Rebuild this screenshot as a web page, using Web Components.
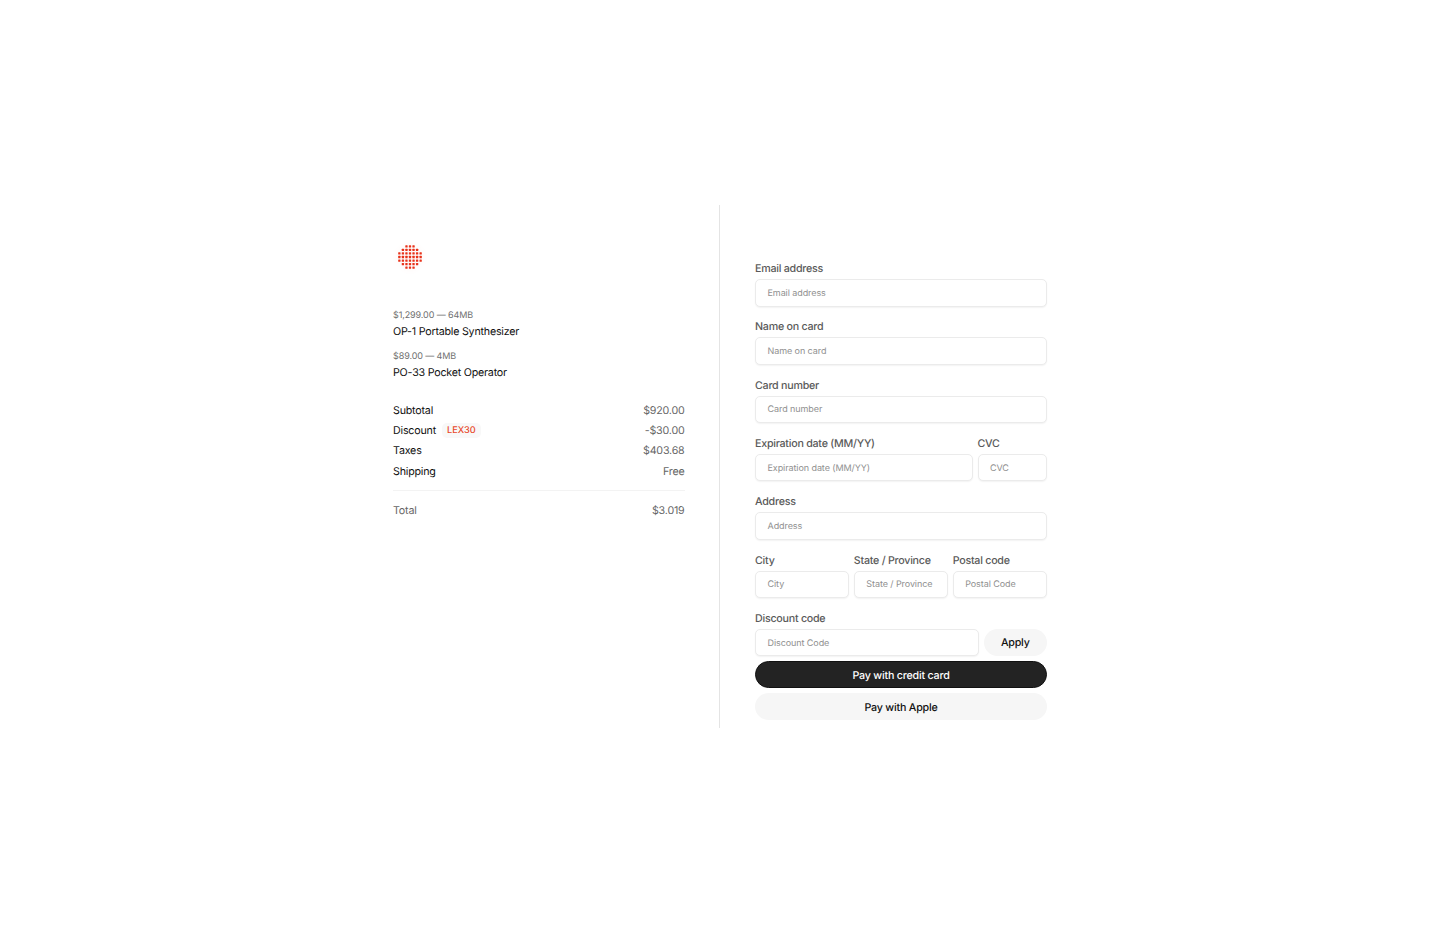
<!DOCTYPE html>
<html lang="en">
<head>
<meta charset="utf-8">
<title>Checkout</title>
<style>
html,body{margin:0;padding:0;height:100%;background:#fff}
body{font-family:Inter,"Liberation Sans",sans-serif;text-rendering:geometricPrecision}
</style>
</head>
<body>
<checkout-page>
  <order-summary slot="left">
    <logo-mark></logo-mark>
    <line-item price="$1,299.00 — 64MB" name="OP-1 Portable Synthesizer"></line-item>
    <line-item price="$89.00 — 4MB" name="PO-33 Pocket Operator"></line-item>
    <div slot="rows">
      <summary-row label="Subtotal" value="$920.00"></summary-row>
      <summary-row label="Discount" value="-$30.00" badge="LEX30"></summary-row>
      <summary-row label="Taxes" value="$403.68"></summary-row>
      <summary-row label="Shipping" value="Free"></summary-row>
    </div>
    <summary-row slot="total" label="Total" value="$3.019" muted></summary-row>
  </order-summary>
  <payment-form slot="right">
    <form-field label="Email address" placeholder="Email address"></form-field>
    <form-field label="Name on card" placeholder="Name on card"></form-field>
    <form-field label="Card number" placeholder="Card number"></form-field>
    <field-row cols="1fr 69.5px">
      <form-field label="Expiration date (MM/YY)" placeholder="Expiration date (MM/YY)"></form-field>
      <form-field label="CVC" placeholder="CVC"></form-field>
    </field-row>
    <form-field label="Address" placeholder="Address"></form-field>
    <field-row cols="1fr 1fr 1fr">
      <form-field label="City" placeholder="City"></form-field>
      <form-field label="State / Province" placeholder="State / Province"></form-field>
      <form-field label="Postal code" placeholder="Postal Code"></form-field>
    </field-row>
    <form-field label="Discount code" placeholder="Discount Code">
      <pill-button slot="after" variant="soft" compact>Apply</pill-button>
    </form-field>
    <pill-button slot="actions" variant="dark">Pay with credit card</pill-button>
    <pill-button slot="actions" variant="soft">Pay with Apple</pill-button>
  </payment-form>
</checkout-page>
<script>
function define(name, css, html){
  customElements.define(name, class extends HTMLElement{
    connectedCallback(){
      if(this.shadowRoot) return;
      const root=this.attachShadow({mode:'open'});
      const body=typeof html==='function'?html(this):html;
      root.innerHTML='<style>'+css+'</style>'+body;
    }
  });
}
const esc=s=>(s||'').replace(/&/g,'&amp;').replace(/"/g,'&quot;').replace(/</g,'&lt;');

define('checkout-page',`
  :host{display:flex;justify-content:center;align-items:center;min-height:933px;box-sizing:border-box}
  .wrap{display:flex;width:654px;height:523px}
  .l{width:327px;flex:none;padding-right:34.5px;box-sizing:border-box;border-right:1px solid #e4e4e4}
  .r{flex:1;padding-left:35px;min-width:0}
`,`<div class="wrap"><div class="l"><slot name="left"></slot></div><div class="r"><slot name="right"></slot></div></div>`);

define('order-summary',`
  :host{display:block;padding-top:39px}
  .rows{margin-top:19.7px;display:block}
  .sep{height:1px;background:#f3f3f3;margin:8.7px 0 9.3px}
  ::slotted(logo-mark){margin:0 0 38.5px 3.8px}
  ::slotted(line-item){margin-bottom:10.7px}
`,`<slot></slot><div class="rows"><slot name="rows"></slot></div><div class="sep"></div><slot name="total"></slot>`);

define('logo-mark',`
  :host{display:block;width:26px;height:26px;filter:drop-shadow(0 0 3px rgba(230,50,20,.08))}
  svg{display:block}
`,()=>{
  const rows=[3,5,7,7,7,5,3];let c='';
  rows.forEach((n,y)=>{const s=(7-n)/2;for(let i=0;i<n;i++){
    c+=`<rect x="${(s+i)*3.55+1.2}" y="${y*3.55+1.2}" width="2.3" height="2.3" rx=".5"/>`;}});
  return `<svg width="26" height="26" viewBox="0 0 26 26" fill="#e8321a" aria-hidden="true">${c}</svg>`;
});

define('line-item',`
  :host{display:block}
  .p{font-size:9px;letter-spacing:-.1px;line-height:13px;color:#707070}
  .n{font-size:10.7px;letter-spacing:-.22px;line-height:14px;color:#111;margin-top:3.5px}
`,el=>`<div class="p">${esc(el.getAttribute('price'))}</div><div class="n">${esc(el.getAttribute('name'))}</div>`);

define('summary-row',`
  :host{display:flex;justify-content:space-between;align-items:center;height:20.4px;font-size:10.7px;letter-spacing:-.2px;color:#111}
  .a{display:flex;align-items:center;gap:5.5px}
  .v{color:#666}
  :host([muted]) .a{color:#666}
  .b{font-size:9.2px;font-weight:500;letter-spacing:0;color:#e8492a;background:#f8f8f8;border-radius:5px;height:15px;line-height:15px;padding:0 5.5px}
`,el=>{
  const b=el.getAttribute('badge');
  return `<div class="a"><span>${esc(el.getAttribute('label'))}</span>${b?`<span class="b">${esc(b)}</span>`:''}</div><span class="v">${esc(el.getAttribute('value'))}</span>`;
});

define('payment-form',`
  :host{display:block;padding-top:57px}
  .f{display:flex;flex-direction:column;gap:13.83px}
  .a{display:flex;flex-direction:column;gap:5px;margin-top:4.7px}
`,`<div class="f"><slot></slot></div><div class="a"><slot name="actions"></slot></div>`);

define('field-row',`
  :host{display:grid;gap:4.5px}
`,el=>{el.style.gridTemplateColumns=el.getAttribute('cols');return '<slot></slot>';});

define('form-field',`
  :host{display:block;min-width:0}
  .t{display:block;font-size:10.7px;letter-spacing:-.25px;font-weight:500;line-height:13px;color:#5a5a5a;margin-bottom:4px;white-space:nowrap}
  .row{display:flex;gap:4.5px}
  .box{flex:1;min-width:0;height:27.5px;box-sizing:border-box;border:1px solid #ebebeb;border-radius:5px;box-shadow:0 1px 1.5px rgba(0,0,0,.05);background:#fff;padding:1px 11.5px 0;display:flex;align-items:center;font-size:9px;letter-spacing:-.08px;color:#909090;white-space:nowrap;overflow:hidden}
`,el=>`<div class="t">${esc(el.getAttribute('label'))}</div><div class="row"><div class="box">${esc(el.getAttribute('placeholder'))}</div><slot name="after"></slot></div>`);

define('pill-button',`
  :host{display:flex;align-items:center;justify-content:center;height:27px;padding-top:1px;border-radius:14px;font-size:10.7px;letter-spacing:-.2px;font-weight:450;box-sizing:border-box}
  :host([compact]){width:63.5px;flex:none}
  :host([variant=dark]){background:#232323;color:#fff;border:1px solid #111}
  :host([variant=soft]){background:#f6f6f6;color:#111}
`,`<slot></slot>`);
</script>
</body>
</html>
